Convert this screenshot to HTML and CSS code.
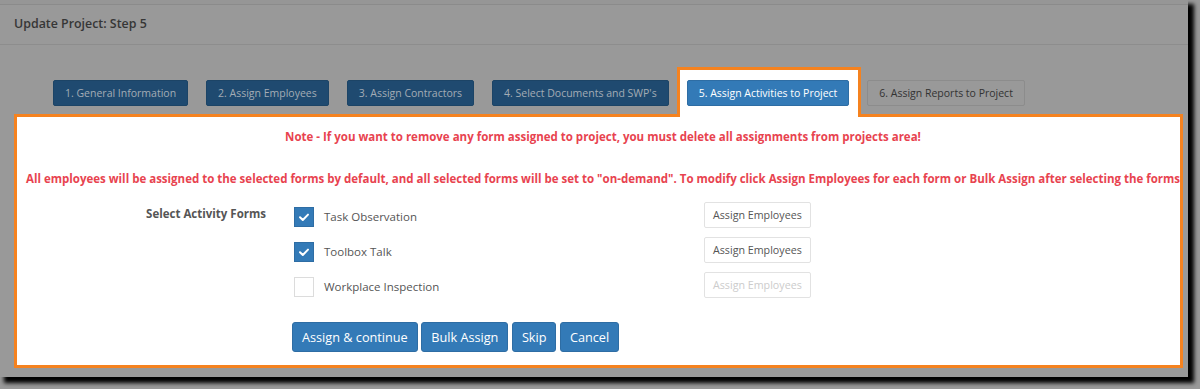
FILE: index.html
```html
<!DOCTYPE html>
<html>
<head>
<meta charset="utf-8">
<link rel="stylesheet" href="styles.css">
</head>
<body>
<div class="window">
  <div class="topstrip"></div>
  <div class="header">Update Project: Step 5</div>
  <div class="tabs">
    <span class="tab">1. General Information</span>
    <span class="tab">2. Assign Employees</span>
    <span class="tab">3. Assign Contractors</span>
    <span class="tab">4. Select Documents and SWP's</span>
    <span class="tab-spot"><span class="tab tab-active">5. Assign Activities to Project</span></span>
    <span class="tab tab-light">6. Assign Reports to Project</span>
  </div>
  <div class="panel">
    <p class="note">Note - If you want to remove any form assigned to project, you must delete all assignments from projects area!</p>
    <p class="note note-wide">All employees will be assigned to the selected forms by default, and all selected forms will be set to "on-demand". To modify click Assign Employees for each form or Bulk Assign after selecting the forms.</p>
    <div class="form">
      <div class="form-label">Select Activity Forms</div>
      <div class="rows">
        <div class="row">
          <label class="check"><span class="box box-on"><svg viewBox="0 0 20 20" width="20" height="20"><path d="M6 10.2l2.8 2.8 5.2-5.4" fill="none" stroke="#fff" stroke-width="2" stroke-linecap="round" stroke-linejoin="round"/></svg></span><span class="check-text">Task Observation</span></label>
          <span class="btn-light">Assign Employees</span>
        </div>
        <div class="row">
          <label class="check"><span class="box box-on"><svg viewBox="0 0 20 20" width="20" height="20"><path d="M6 10.2l2.8 2.8 5.2-5.4" fill="none" stroke="#fff" stroke-width="2" stroke-linecap="round" stroke-linejoin="round"/></svg></span><span class="check-text">Toolbox Talk</span></label>
          <span class="btn-light">Assign Employees</span>
        </div>
        <div class="row">
          <label class="check"><span class="box"></span><span class="check-text">Workplace Inspection</span></label>
          <span class="btn-light btn-disabled">Assign Employees</span>
        </div>
      </div>
    </div>
    <div class="actions">
      <span class="btn">Assign &amp; continue</span>
      <span class="btn">Bulk Assign</span>
      <span class="btn">Skip</span>
      <span class="btn">Cancel</span>
    </div>
  </div>
</div>
</body>
</html>
```
FILE: styles.css
```css
* { box-sizing: border-box; }
html, body { margin: 0; padding: 0; }
body {
  background: #999999;
  width: 1200px;
  height: 389px;
  overflow: hidden;
  font-family: "Open Sans", "Liberation Sans", sans-serif;
}
.window {
  width: 1188px;
  height: 377px;
  background: #999999;
  box-shadow: 5px 5px 4px 1px #000;
}
.topstrip {
  height: 5px;
  background: #969696;
  border-bottom: 1px solid #8b8b8b;
}
.header {
  height: 40px;
  padding: 10px 0 0 14px;
  border-bottom: 1px solid #8d8d8d;
  font-size: 12.4px;
  line-height: 18px;
  font-weight: 600;
  color: #363636;
}
.tabs {
  display: flex;
  align-items: flex-start;
  gap: 18px;
  margin-top: 35px;
  padding-left: 53px;
}
.tab {
  display: inline-flex;
  align-items: center;
  height: 26px;
  padding: 0 11px;
  border: 1px solid #1c4466;
  border-radius: 2px;
  background: #1f4a70;
  color: #a3acb5;
  font-size: 10.5px;
  white-space: nowrap;
}
.tab-narrow { letter-spacing: -0.1px; }
.tab-spot {
  position: relative;
  z-index: 1;
  display: inline-flex;
  margin: -13px -12px -3px -10px;
  padding: 10px 9px 11px 7px;
  background: #fff;
  border: 3px solid #f5821f;
  border-bottom: none;
}
.tab-active {
  background: #337ab7;
  border-color: #2e6da4;
  color: #fff;
}
.tab-light {
  background: #999999;
  border-color: #8c8c8c;
  color: #333;
}
.panel {
  width: 1169px;
  height: 254px;
  margin-left: 14px;
  background: #fff;
  border: 3px solid #f5821f;
  padding: 11px 0 0 9px;
  overflow: hidden;
}
.note {
  margin: 0;
  font-size: 11.5px;
  line-height: 17px;
  font-weight: 700;
  color: #e8434f;
  text-align: center;
  white-space: nowrap;
}
.note-wide {
  margin-top: 25px;
  text-align: left;
}
.form {
  display: flex;
  margin-top: 15px;
}
.form-label {
  width: 240px;
  text-align: right;
  padding-top: 3px;
  font-size: 11.5px;
  line-height: 17px;
  font-weight: 700;
  color: #555;
}
.rows {
  margin-left: 28px;
  display: flex;
  flex-direction: column;
  gap: 9px;
}
.row {
  display: flex;
  align-items: center;
  height: 26px;
}
.check {
  display: flex;
  align-items: center;
  width: 410px;
  padding-top: 3px;
}
.box {
  width: 20px;
  height: 20px;
  border: 1px solid #dcdcdc;
  background: #fff;
  display: inline-flex;
}
.box-on {
  background: #337ab7;
  border-color: #2e6da4;
}
.box svg { margin: -1px; }
.check-text {
  margin-left: 10px;
  font-size: 11.5px;
  color: #555;
}
.btn-light {
  display: inline-flex;
  align-items: center;
  height: 26px;
  padding: 0 8px;
  border: 1px solid #e2e2e2;
  border-radius: 2px;
  font-size: 10.7px;
  color: #555;
  background: #fff;
}
.btn-disabled { color: #cccccc; }
.actions {
  display: flex;
  gap: 3.5px;
  margin-top: 24px;
  margin-left: 266px;
}
.btn {
  display: inline-flex;
  align-items: center;
  height: 30px;
  padding: 0 9px;
  background: #337ab7;
  border: 1px solid #2e6da4;
  border-radius: 3px;
  color: #fff;
  font-size: 12.7px;
}
```
